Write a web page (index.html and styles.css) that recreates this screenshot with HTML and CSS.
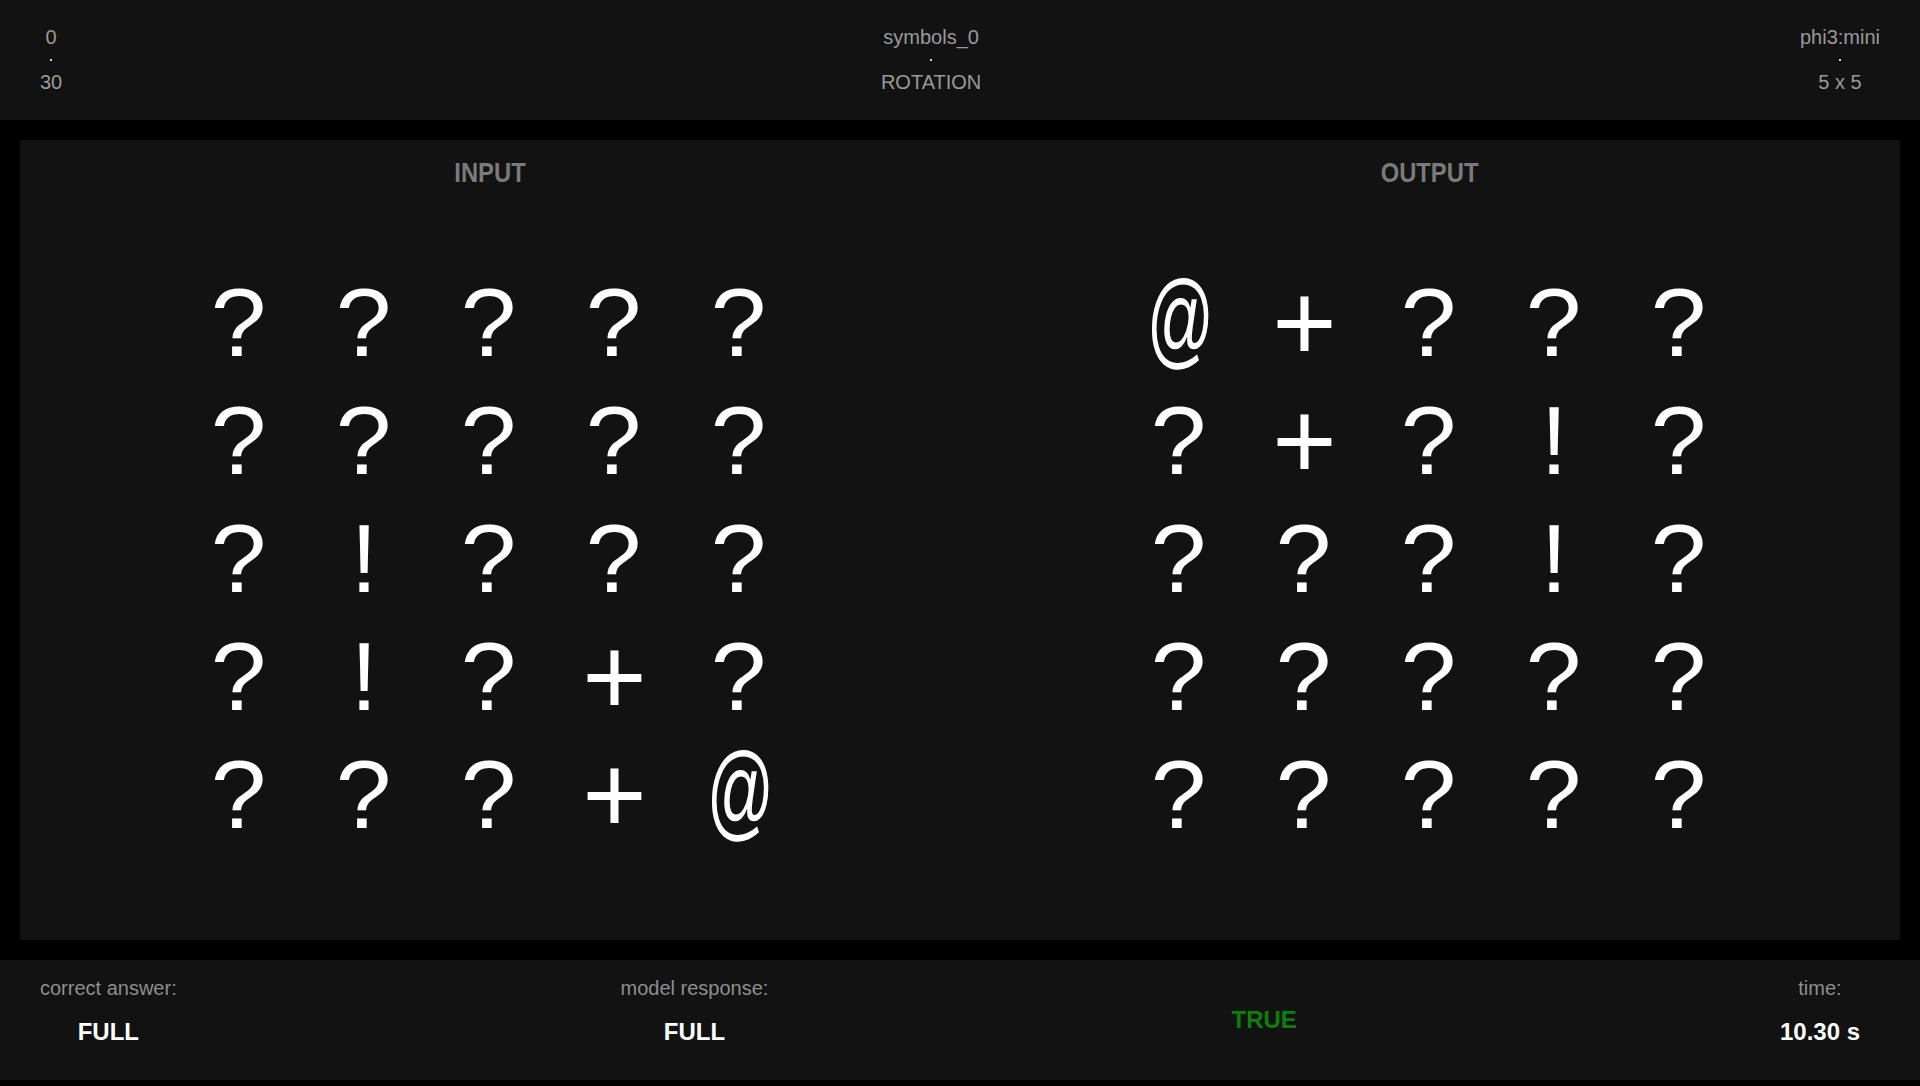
FILE: index.html
```html
<!DOCTYPE html>
<html lang="en">
<head>
<meta charset="utf-8">
<title>symbols_0 · ROTATION</title>
<link rel="stylesheet" href="styles.css">
</head>
<body>
<header class="topbar">
  <div class="meta"><span>0</span><i class="dot"></i><span>30</span></div>
  <div class="meta"><span>symbols_0</span><i class="dot"></i><span>ROTATION</span></div>
  <div class="meta"><span>phi3:mini</span><i class="dot"></i><span>5 x 5</span></div>
</header>

<main class="board">
  <section class="side">
    <h2 class="title">INPUT</h2>
    <div class="grid">
      <span class="q">?</span><span class="q">?</span><span class="q">?</span><span class="q">?</span><span class="q">?</span>
      <span class="q">?</span><span class="q">?</span><span class="q">?</span><span class="q">?</span><span class="q">?</span>
      <span class="q">?</span><span class="ex">!</span><span class="q">?</span><span class="q">?</span><span class="q">?</span>
      <span class="q">?</span><span class="ex">!</span><span class="q">?</span><span class="pl">+</span><span class="q">?</span>
      <span class="q">?</span><span class="q">?</span><span class="q">?</span><span class="pl">+</span><span class="at">@</span>
    </div>
  </section>
  <section class="side">
    <h2 class="title">OUTPUT</h2>
    <div class="grid">
      <span class="at">@</span><span class="pl">+</span><span class="q">?</span><span class="q">?</span><span class="q">?</span>
      <span class="q">?</span><span class="pl">+</span><span class="q">?</span><span class="ex">!</span><span class="q">?</span>
      <span class="q">?</span><span class="q">?</span><span class="q">?</span><span class="ex">!</span><span class="q">?</span>
      <span class="q">?</span><span class="q">?</span><span class="q">?</span><span class="q">?</span><span class="q">?</span>
      <span class="q">?</span><span class="q">?</span><span class="q">?</span><span class="q">?</span><span class="q">?</span>
    </div>
  </section>
</main>

<footer class="footer">
  <div class="stat">
    <span class="label">correct answer:</span>
    <span class="value">FULL</span>
  </div>
  <div class="stat">
    <span class="label">model response:</span>
    <span class="value">FULL</span>
  </div>
  <div class="verdict">TRUE</div>
  <div class="stat stat-time">
    <span class="label">time:</span>
    <span class="value">10.30 s</span>
  </div>
</footer>
</body>
</html>
```

FILE: styles.css
```css
html, body {
  margin: 0;
  padding: 0;
}

body {
  background: #000;
  font-family: "Liberation Sans", Arial, sans-serif;
  width: 1920px;
  height: 1086px;
  overflow: hidden;
}

.topbar {
  height: 120px;
  box-sizing: border-box;
  background: #121212;
  display: flex;
  justify-content: space-between;
  align-items: center;
  padding: 0 40px;
  margin-bottom: 20px;
}

.meta {
  display: flex;
  flex-direction: column;
  align-items: center;
  font-size: 20px;
  line-height: 23px;
  color: #9a9a9a;
}

.dot {
  display: block;
  width: 2px;
  height: 2px;
  background: #d8d8d8;
  margin: 10px 0;
}

.board {
  margin: 0 20px 20px;
  height: 800px;
  box-sizing: border-box;
  background: #121212;
  display: flex;
  padding-top: 17px;
}

.side {
  flex: 1;
  display: flex;
  flex-direction: column;
  align-items: center;
}

.title {
  margin: 0;
  font-family: "Liberation Sans", Arial, sans-serif;
  font-weight: bold;
  font-size: 28px;
  line-height: 32px;
  color: #7a7a7a;
  transform: scaleX(0.85);
}

.grid {
  margin-top: 75px;
  padding-right: 4px;
  display: grid;
  grid-template-columns: repeat(5, 125px);
  grid-auto-rows: 118px;
  font-family: "Liberation Sans", Arial, sans-serif;
  font-size: 96px;
  line-height: 118px;
  color: #fff;
  text-align: center;
}

.grid span {
  display: block;
}

.q {
  transform: scaleX(1.04);
}

.ex {
  transform: translateX(1px);
}

.pl {
  transform: translateX(1px) scale(1.15);
  transform-origin: 50% 49%;
}

.at {
  transform: translate(2px, -4px) scale(0.69, 1.1);
}

.footer {
  height: 120px;
  box-sizing: border-box;
  background: #121212;
  display: flex;
  justify-content: space-between;
  padding: 17px 40px 0;
}

.stat {
  display: flex;
  flex-direction: column;
  align-items: center;
  gap: 18px;
}

.stat-time {
  width: 120px;
}

.label {
  font-size: 20px;
  line-height: 23px;
  color: #8e8e8e;
}

.value {
  font-size: 24px;
  line-height: 28px;
  font-weight: bold;
  color: #fff;
}

.verdict {
  width: 104px;
  text-align: center;
  align-self: center;
  margin-top: -17px;
  font-size: 24px;
  line-height: 28px;
  font-weight: bold;
  color: #0a800a;
}
```
